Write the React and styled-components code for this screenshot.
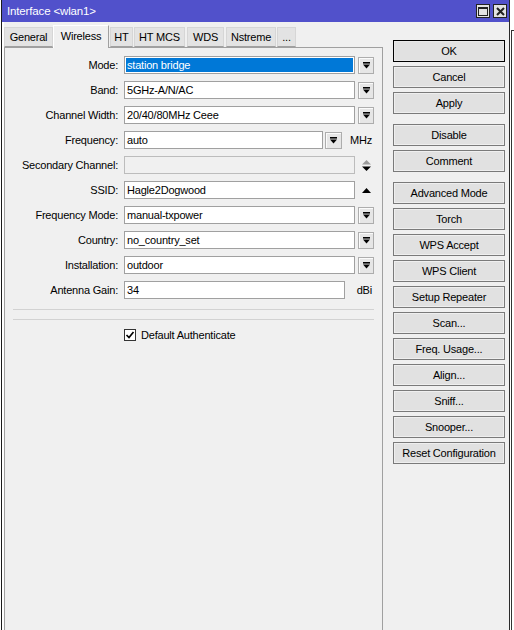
import React from 'react';
import styled, { createGlobalStyle } from 'styled-components';

const Global = createGlobalStyle`
  html, body { margin: 0; padding: 0; background: #fff; overflow: hidden; }
  body {
    font-family: "Liberation Sans", Arial, sans-serif;
    font-size: 11px;
    letter-spacing: -0.2px;
    color: #000;
  }
  #root { height: 630px; }
`;

const Page = styled.div`
  display: flex;
  height: 630px;
`;

const Window = styled.div`
  box-sizing: border-box;
  margin-left: 1px;
  width: 510px;
  height: 630px;
  border-left: 1px solid #1b1b1b;
  border-right: 1px solid #2a2a2a;
  display: flex;
  flex-direction: column;
  background: #f0f0f0;
`;

const BackEdge = styled.div`
  flex: none;
  width: 2px;
  margin-left: 1px;
  margin-top: 30px;
  border-top: 1px solid #333;
  border-left: 1px solid #333;
`;

const TitleBar = styled.div`
  flex: none;
  height: 22px;
  background: #5151cb;
  display: flex;
  align-items: center;
  padding: 0 2px 0 5px;
  color: #fff;
`;

const Title = styled.span`
  flex: 1;
  font-size: 11.5px;
  letter-spacing: -0.15px;
`;

const TitleButtons = styled.div`
  display: flex;
  gap: 3px;
`;

const TitleBtn = styled.div`
  box-sizing: border-box;
  width: 14px;
  height: 14px;
  border: 1px solid #222;
  background: #e2e2e2;
  display: flex;
  align-items: center;
  justify-content: center;
`;

const Body = styled.div`
  flex: 1;
  display: flex;
  border-left: 2px solid #fff;
  padding-top: 3px;
  min-height: 0;
`;

const LeftPane = styled.div`
  width: 379px;
  flex: none;
  display: flex;
  flex-direction: column;
`;

const TabRow = styled.div`
  display: flex;
  align-items: flex-end;
  height: 22px;
  position: relative;
  z-index: 1;
`;

const Tab = styled.div`
  box-sizing: border-box;
  width: ${p => p.$w}px;
  margin-right: ${p => p.$mr || 0}px;
  height: ${p => (p.$active ? 23 : 20)}px;
  margin-bottom: ${p => (p.$active ? -1 : 0)}px;
  background: ${p => (p.$active ? '#f0f0f0' : '#e3e3e3')};
  border: 1px solid ${p => (p.$active ? '#fff' : '#d6d6d6')};
  border-right-color: ${p => (p.$active ? '#a0a0a0' : '#d6d6d6')};
  border-bottom: ${p => (p.$active ? 'none' : '1px solid #a0a0a0')};
  display: flex;
  align-items: center;
  justify-content: center;
  padding-bottom: ${p => (p.$active ? 3 : 0)}px;
  white-space: nowrap;
`;

const Panel = styled.div`
  flex: 1;
  border: 1px solid #a0a0a0;
  border-bottom: none;
  padding-top: 8px;
  display: flex;
  flex-direction: column;
  gap: 7px;
`;

const Row = styled.div`
  display: flex;
  align-items: center;
  height: 18px;
  gap: 6px;
`;

const Label = styled.div`
  flex: none;
  width: 113px;
  text-align: right;
  white-space: nowrap;
`;

const Field = styled.div`
  flex: none;
  width: 250px;
  height: 18px;
  display: flex;
  align-items: center;
  gap: ${p => p.$gap || 0}px;
`;

const Input = styled.div`
  box-sizing: border-box;
  flex: 1;
  height: 18px;
  border: 1px solid ${p => (p.$disabled ? '#bcbcbc' : '#a0a0a0')};
  background: ${p => (p.$disabled ? '#f0f0f0' : '#fff')};
  padding: ${p => (p.$selected ? '1px' : '0 2px')};
  display: flex;
  align-items: center;
  white-space: nowrap;
  overflow: hidden;
`;

const Selection = styled.span`
  flex: 1;
  align-self: stretch;
  background: #0078d7;
  color: #fff;
  padding-left: 1px;
  display: flex;
  align-items: center;
`;

const DropBtn = styled.div`
  box-sizing: border-box;
  flex: none;
  width: ${p => p.$w || 16}px;
  height: 17px;
  border: 1px solid #adadad;
  background: #e6e6e6;
  box-shadow: inset 1px 1px 0 #fbfbfb;
  display: flex;
  align-items: center;
  justify-content: center;
`;

const IconSlot = styled.div`
  flex: none;
  width: 16px;
  display: flex;
  align-items: center;
  justify-content: center;
`;

const Unit = styled.div`
  flex: none;
  width: ${p => p.$w}px;
  text-align: right;
  padding-right: 2px;
  box-sizing: border-box;
`;

const Separator = styled.div`
  box-sizing: border-box;
  margin: 3px 0 0 8px;
  width: 361px;
  height: 11px;
  border-top: 1px solid #d2d2d2;
  border-bottom: 1px solid #d2d2d2;
`;

const CheckRow = styled.div`
  display: flex;
  align-items: center;
  gap: 5px;
  margin-top: 2px;
  padding-left: 119px;
  height: 12px;
`;

const CheckBox = styled.div`
  box-sizing: border-box;
  width: 12px;
  height: 12px;
  border: 1px solid #333;
  background: #fff;
  display: flex;
  align-items: center;
  justify-content: center;
`;

const RightPane = styled.div`
  flex: none;
  margin-left: 10px;
  padding-top: 15px;
  display: flex;
  flex-direction: column;
`;

const Button = styled.div`
  box-sizing: border-box;
  width: 112px;
  height: 22px;
  margin-top: ${p => (p.$first ? 0 : p.$group ? 10 : 4)}px;
  background: #e1e1e1;
  border: 1px solid ${p => (p.$default ? '#000' : '#7a7a7a')};
  box-shadow: inset 0 0 0 1px ${p => (p.$default ? '#e9e9e9' : '#efefef')};
  display: flex;
  align-items: center;
  justify-content: center;
  white-space: nowrap;
`;

const DropIcon = () => (
  <svg width="7" height="7" viewBox="0 0 7 7">
    <rect x="0" y="0" width="7" height="1.6" fill="#000" />
    <path d="M0 2.6 H7 L3.5 6.6 Z" fill="#000" />
  </svg>
);

const SpinIcon = () => (
  <svg width="9" height="11" viewBox="0 0 9 11">
    <path d="M0 4.5 L4.5 0 L9 4.5 Z" fill="#9a9a9a" />
    <path d="M0 6.5 H9 L4.5 11 Z" fill="#000" />
  </svg>
);

const UpIcon = () => (
  <svg width="9" height="5" viewBox="0 0 9 5">
    <path d="M0 5 L4.5 0 L9 5 Z" fill="#000" />
  </svg>
);

const MaxIcon = () => (
  <svg width="10" height="9" viewBox="0 0 10 9">
    <rect x="0.5" y="1" width="9" height="7.5" fill="none" stroke="#222" strokeWidth="1" />
    <rect x="0" y="0" width="10" height="2" fill="#222" />
  </svg>
);

const CloseIcon = () => (
  <svg width="9" height="9" viewBox="0 0 9 9">
    <path d="M1 1 L8 8 M8 1 L1 8" stroke="#222" strokeWidth="2" />
  </svg>
);

const CheckIcon = () => (
  <svg width="10" height="10" viewBox="0 0 10 10">
    <path d="M1.5 5 L4 7.5 L8.5 2" fill="none" stroke="#000" strokeWidth="1.7" />
  </svg>
);

const tabs = [
  { t: 'General', w: 49 },
  { t: 'Wireless', w: 56, active: true, mr: 1 },
  { t: 'HT', w: 23, mr: 1 },
  { t: 'HT MCS', w: 51, mr: 2 },
  { t: 'WDS', w: 37, mr: 2 },
  { t: 'Nstreme', w: 50, mr: 1 },
  { t: '...', w: 19 },
];

const buttons = [
  { t: 'OK', def: true, first: true },
  { t: 'Cancel' },
  { t: 'Apply' },
  { t: 'Disable', group: true },
  { t: 'Comment' },
  { t: 'Advanced Mode', group: true },
  { t: 'Torch' },
  { t: 'WPS Accept' },
  { t: 'WPS Client' },
  { t: 'Setup Repeater' },
  { t: 'Scan...' },
  { t: 'Freq. Usage...' },
  { t: 'Align...' },
  { t: 'Sniff...' },
  { t: 'Snooper...' },
  { t: 'Reset Configuration' },
];

const SelectRow = ({ label, value, selected }) => (
  <Row>
    <Label>{label}:</Label>
    <Field $gap={3}>
      <Input $selected={selected}>
        {selected ? <Selection>{value}</Selection> : value}
      </Input>
      <DropBtn>
        <DropIcon />
      </DropBtn>
    </Field>
  </Row>
);

export default function App() {
  return (
    <>
      <Global />
      <Page>
        <Window>
          <TitleBar>
            <Title>Interface &lt;wlan1&gt;</Title>
            <TitleButtons>
              <TitleBtn><MaxIcon /></TitleBtn>
              <TitleBtn><CloseIcon /></TitleBtn>
            </TitleButtons>
          </TitleBar>
          <Body>
            <LeftPane>
              <TabRow>
                {tabs.map(tb => (
                  <Tab key={tb.t} $w={tb.w} $mr={tb.mr} $active={tb.active}>
                    {tb.t}
                  </Tab>
                ))}
              </TabRow>
              <Panel>
                <SelectRow label="Mode" value="station bridge" selected />
                <SelectRow label="Band" value="5GHz-A/N/AC" />
                <SelectRow label="Channel Width" value="20/40/80MHz Ceee" />
                <Row>
                  <Label>Frequency:</Label>
                  <Field $gap={2}>
                    <Input>auto</Input>
                    <DropBtn $w={17}>
                      <DropIcon />
                    </DropBtn>
                    <Unit $w={30}>MHz</Unit>
                  </Field>
                </Row>
                <Row>
                  <Label>Secondary Channel:</Label>
                  <Field $gap={3}>
                    <Input $disabled />
                    <IconSlot><SpinIcon /></IconSlot>
                  </Field>
                </Row>
                <Row>
                  <Label>SSID:</Label>
                  <Field $gap={3}>
                    <Input>Hagle2Dogwood</Input>
                    <IconSlot><UpIcon /></IconSlot>
                  </Field>
                </Row>
                <SelectRow label="Frequency Mode" value="manual-txpower" />
                <SelectRow label="Country" value="no_country_set" />
                <SelectRow label="Installation" value="outdoor" />
                <Row>
                  <Label>Antenna Gain:</Label>
                  <Field>
                    <Input>34</Input>
                    <Unit $w={29}>dBi</Unit>
                  </Field>
                </Row>
                <Separator />
                <CheckRow>
                  <CheckBox><CheckIcon /></CheckBox>
                  <span>Default Authenticate</span>
                </CheckRow>
              </Panel>
            </LeftPane>
            <RightPane>
              {buttons.map(b => (
                <Button key={b.t} $default={b.def} $first={b.first} $group={b.group}>
                  {b.t}
                </Button>
              ))}
            </RightPane>
          </Body>
        </Window>
        <BackEdge />
      </Page>
    </>
  );
}
